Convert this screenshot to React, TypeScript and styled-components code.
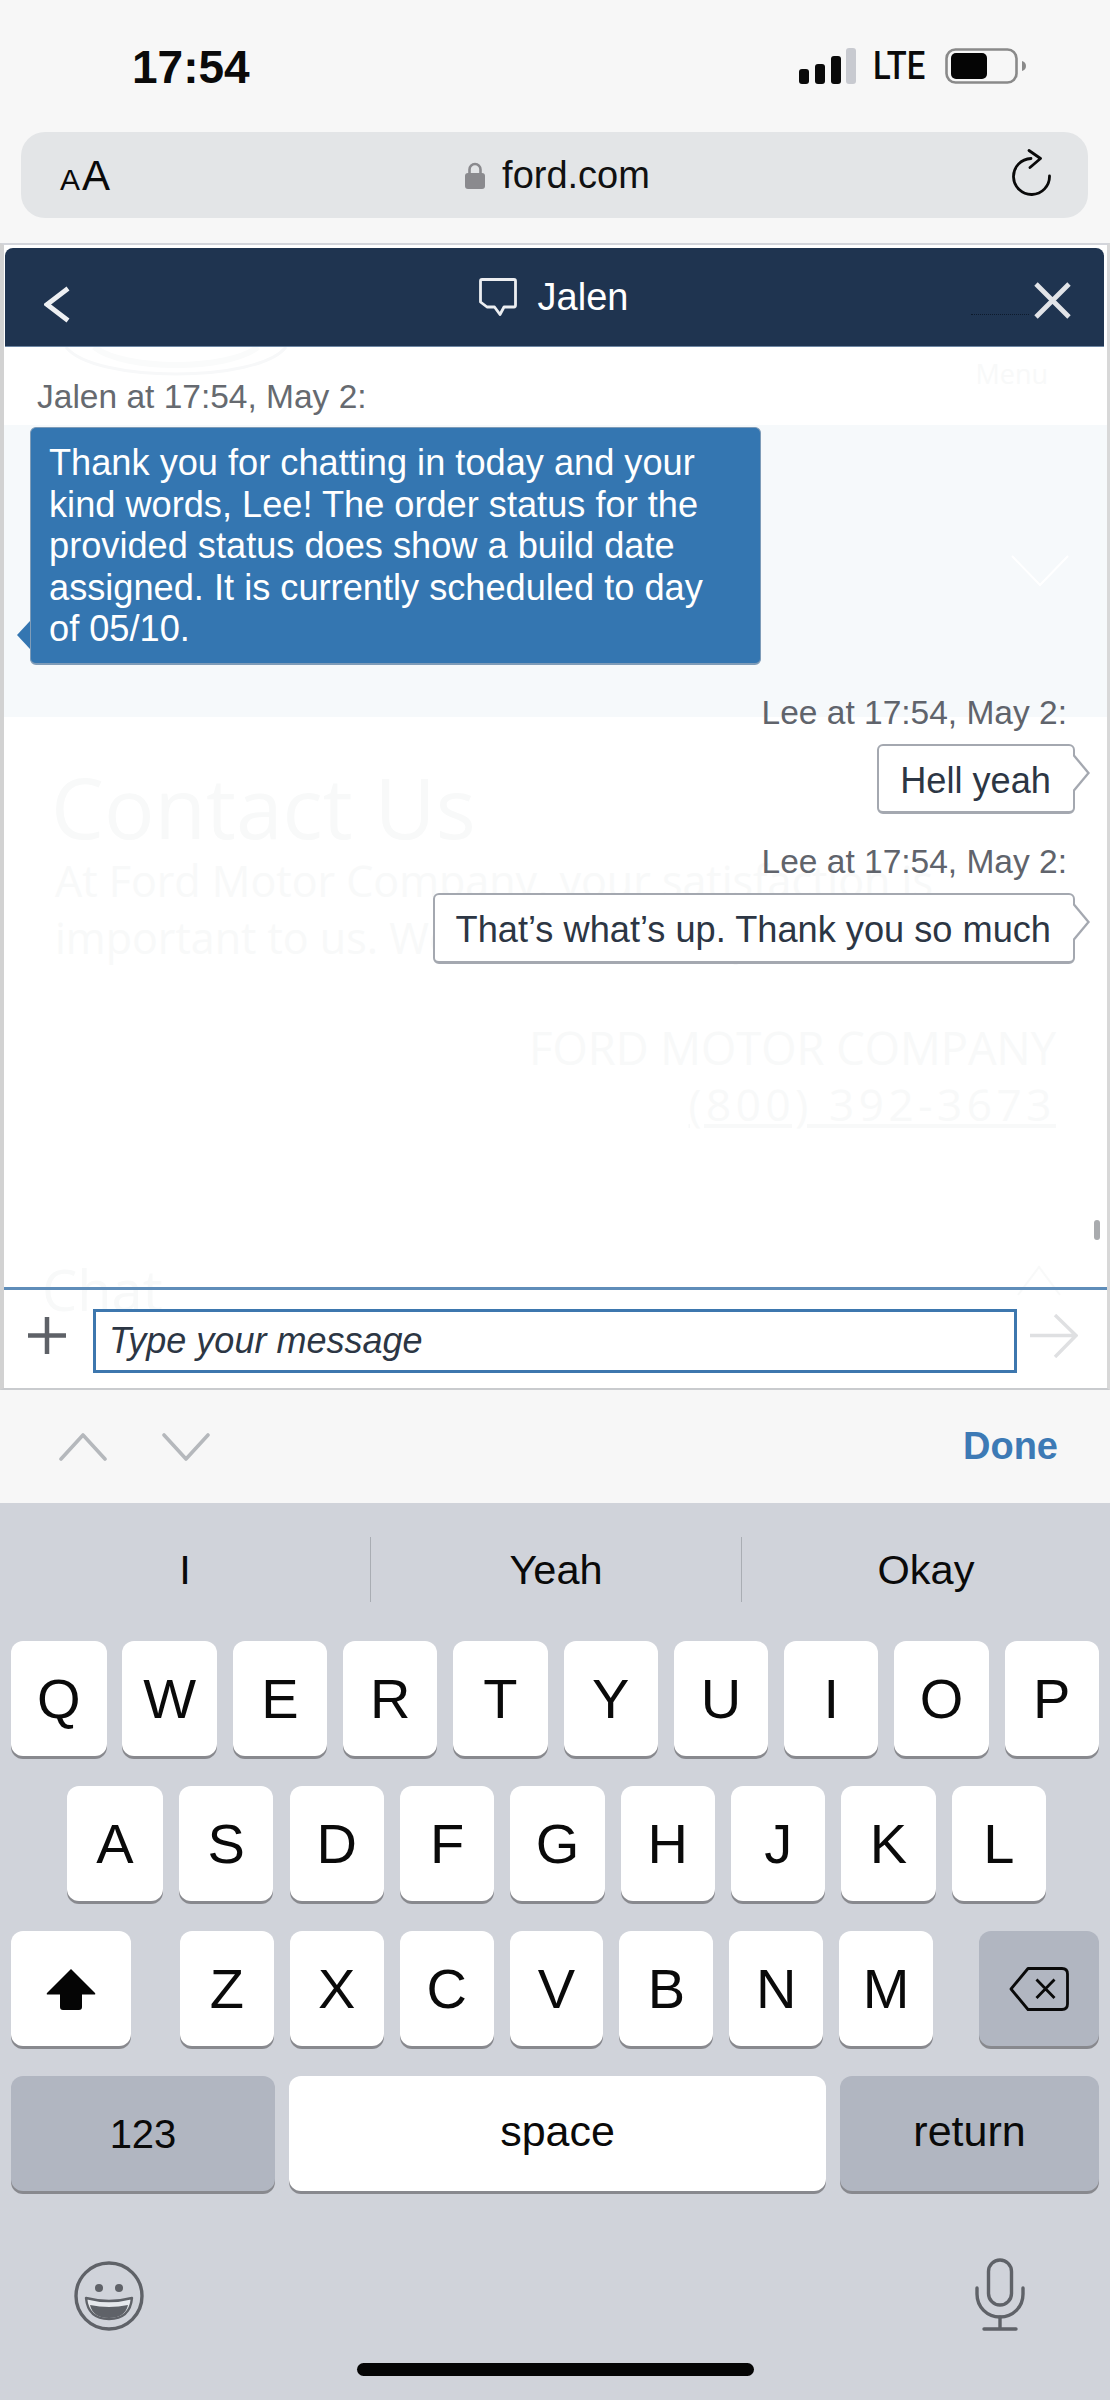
import React from 'react'
import styled, { createGlobalStyle } from 'styled-components'

const GlobalStyle = createGlobalStyle`
  html, body {
    margin: 0;
    padding: 0;
    background: #fff;
  }
  * {
    box-sizing: border-box;
  }
`

const sans = `"Liberation Sans", Arial, sans-serif`
const ghostFont = `"Open Sans", "Noto Sans", sans-serif`

const Screen = styled.div`
  width: 1110px;
  height: 2400px;
  display: flex;
  flex-direction: column;
  overflow: hidden;
  font-family: ${sans};
`

/* browser chrome */
const Chrome = styled.div`
  height: 243px;
  background: #f7f7f7;
  padding: 0 22px 0 21px;
`
const StatusBar = styled.div`
  height: 132px;
  display: flex;
  justify-content: space-between;
  align-items: center;
  padding: 0 62px 0 111px;
`
const Time = styled.div`
  font-size: 46px;
  font-weight: 700;
  color: #0a0a0a;
  line-height: 1;
  position: relative;
  top: 1px;
`
const StatusIcons = styled.div`
  display: flex;
  align-items: center;
  gap: 17px;
`
const Lte = styled.div`
  width: 55px;
  font-family: Roboto, sans-serif;
  font-size: 39px;
  font-weight: 500;
  line-height: 1;
  color: #0a0a0a;
  transform: scaleX(0.84);
  transform-origin: left center;
  white-space: nowrap;
`
const UrlBar = styled.div`
  height: 86px;
  border-radius: 24px;
  background: #e3e5e7;
  display: grid;
  grid-template-columns: 1fr auto 1fr;
  align-items: center;
  padding: 0 37px 0 39px;
`
const TextSize = styled.div`
  display: flex;
  align-items: baseline;
  gap: 2px;
  color: #0a0a0a;
  line-height: 1;
  position: relative;
  top: 1px;
`
const TextSizeA = styled.span<{ $big?: boolean }>`
  font-size: ${p => (p.$big ? 42 : 30)}px;
`
const Address = styled.div`
  display: flex;
  align-items: center;
  gap: 17px;
  padding-left: 4px;
  font-size: 38px;
  color: #111;
`
const Reload = styled.div`
  display: flex;
  justify-content: flex-end;
  margin-bottom: 5px;
`

/* the web page with the chat widget */
const WebView = styled.div`
  height: 1147px;
  background: #fff;
  border-top: 2px solid #d3d5db;
  border-bottom: 2px solid #c9cbce;
  border-left: 4px solid #d2d2d2;
  border-right: 3px solid #d8d8d8;
  padding-top: 3px;
  display: flex;
  flex-direction: column;
`
const ChatHeader = styled.div`
  height: 99px;
  margin: 0 3px 0 1px;
  flex: none;
  background: #1f3450;
  border-radius: 8px 8px 0 0;
  border-bottom: 1px solid #6d86a3;
  display: flex;
  justify-content: space-between;
  align-items: center;
  padding: 0 33px 0 39px;
  position: relative;
  z-index: 2;
`
const HeaderButton = styled.div<{ $offset: number }>`
  display: flex;
  margin-top: ${p => p.$offset}px;
  position: relative;
`
const CloseButton = styled(HeaderButton)`
  &::before {
    content: '';
    position: absolute;
    left: -63px;
    top: 32px;
    width: 58px;
    border-top: 1px dotted #0d1a2c;
  }
`
const HeaderTitle = styled.div`
  display: flex;
  align-items: center;
  gap: 21px;
  color: #fff;
  font-size: 38px;
  line-height: 1;
  position: relative;
  left: 1px;
`
const Stack = styled.div`
  height: 1041px;
  display: grid;
  & > * {
    grid-area: 1 / 1;
    min-width: 0;
    min-height: 0;
  }
`

/* faint page behind the widget */
const GhostPage = styled.div`
  overflow: hidden;
  font-family: ${ghostFont};
  color: #f8f9f9;
`
const GhostTop = styled.div`
  height: 78px;
  display: flex;
  justify-content: space-between;
  align-items: flex-start;
  padding: 0 59px 0 60px;
`
const GhostMenu = styled.div`
  font-size: 27px;
  line-height: 1;
  margin-top: 13px;
`
const GhostBand = styled.div`
  height: 292px;
  background: #f6f9fb;
  display: flex;
  justify-content: flex-end;
  align-items: center;
  padding-right: 38px;
`
const GhostHeading = styled.div`
  margin: 50px 0 0 47px;
  font-size: 84px;
  line-height: 80px;
`
const GhostParagraph = styled.div`
  margin: 5px 0 0 51px;
  width: 900px;
  font-size: 43px;
  line-height: 57px;
`
const GhostContact = styled.div`
  margin-top: 53px;
  padding-right: 51px;
  display: flex;
  flex-direction: column;
  align-items: flex-end;
  font-size: 45.3px;
  line-height: 57px;
`
const GhostPhone = styled.div`
  text-decoration: underline;
  letter-spacing: 4.6px;
  font-size: 44px;
`
const GhostChatRow = styled.div`
  margin-top: 126px;
  padding: 0 46px 0 38px;
  display: flex;
  justify-content: space-between;
  font-size: 56px;
  line-height: 60px;
`

/* messages */
const Foreground = styled.div`
  display: flex;
  flex-direction: column;
`
const Messages = styled.div`
  flex: 1;
  position: relative;
  padding: 31px 32px 0 26px;
  display: flex;
  flex-direction: column;
`
const Meta = styled.div<{ $mine?: boolean }>`
  font-size: 33.5px;
  line-height: 38px;
  color: ${p => (p.$mine ? '#60646c' : '#666a70')};
  margin: ${p => (p.$mine ? '29px 8px 0 0' : '0 0 0 7px')};
  align-self: ${p => (p.$mine ? 'flex-end' : 'flex-start')};
`
const AgentBubble = styled.div`
  position: relative;
  width: 731px;
  margin-top: 11px;
  padding: 14px 35px 13px 18px;
  background: #3476b1;
  border: 1px solid #7f9cb8;
  border-bottom-width: 2px;
  border-radius: 6px;
  color: #fff;
  font-size: 36.2px;
  line-height: 41.5px;

  &::before {
    content: '';
    position: absolute;
    left: -14px;
    bottom: 14px;
    border-style: solid;
    border-width: 14px 13px 14px 0;
    border-color: transparent #3476b1 transparent transparent;
  }
`
const MyBubble = styled.div`
  position: relative;
  align-self: flex-end;
  margin-top: 12px;
  padding: 14px 22px 10px 21px;
  background: #fff;
  border: 2px solid #a4a8b0;
  border-bottom-width: 3px;
  border-radius: 6px;
  color: #2c3644;
  font-size: 36.2px;
  line-height: 41.5px;
  white-space: nowrap;

  &::before,
  &::after {
    content: '';
    position: absolute;
    top: 9px;
    border-style: solid;
    border-width: 18px 0 18px 15px;
    border-color: transparent transparent transparent #a4a8b0;
  }
  &::before {
    right: -17px;
  }
  &::after {
    right: -14px;
    border-left-color: #fff;
  }
`
const ScrollThumb = styled.div`
  position: absolute;
  right: 7px;
  bottom: 47px;
  width: 6px;
  height: 20px;
  border-radius: 3px;
  background: #a9abae;
`
const InputBar = styled.div`
  height: 101px;
  flex: none;
  border-top: 3px solid #5f8db9;
  display: flex;
  align-items: center;
  padding: 3px 26px 0 24px;
`
const InputIcon = styled.div`
  display: flex;
  margin-bottom: 10px;
`
const MessageField = styled.div`
  width: 924px;
  height: 64px;
  margin: 0 13px 0 27px;
  border: 3px solid #3d77ae;
  background: #fff;
  padding-left: 13px;
  display: flex;
  align-items: center;
  font-size: 36px;
  font-style: italic;
  color: #2c3644;
`

/* accessory bar */
const AccessoryBar = styled.div`
  height: 113px;
  flex: none;
  background: #f7f7f7;
  display: flex;
  align-items: center;
  padding: 0 52px 0 59px;
  gap: 55px;
`
const DoneLabel = styled.div`
  margin-left: auto;
  font-size: 38px;
  font-weight: 700;
  color: #3d7ab5;
`

/* keyboard */
const Keyboard = styled.div`
  flex: 1;
  background: #d0d3da;
  display: flex;
  flex-direction: column;
`
const Suggestions = styled.div`
  display: grid;
  grid-template-columns: 371px 371px 1fr;
  margin-top: 34px;
  height: 65px;
`
const Suggestion = styled.div<{ $last?: boolean }>`
  display: flex;
  align-items: center;
  justify-content: center;
  font-size: 41.5px;
  color: #0a0a0a;
  border-right: ${p => (p.$last ? 'none' : '1.5px solid #a9adb3')};
`
const Rows = styled.div`
  margin-top: 39px;
  padding: 0 11px;
  display: flex;
  flex-direction: column;
  gap: 30px;
`
const KeyRow = styled.div<{ $inset?: boolean }>`
  display: flex;
  justify-content: space-between;
  padding: ${p => (p.$inset ? '0 53px 0 56px' : '0')};
`
const KeyGroup = styled.div`
  display: flex;
  gap: 16px;
  margin-left: 3px;
`
const Key = styled.div<{ $w?: number; $dark?: boolean; $size?: number; $lift?: number }>`
  width: ${p => p.$w ?? 94.3}px;
  height: 115px;
  flex: none;
  display: flex;
  align-items: center;
  justify-content: center;
  border-radius: 12px;
  background: ${p => (p.$dark ? '#b1b6c1' : '#fff')};
  box-shadow: 0 3px 0 #88898e;
  color: #0a0a0a;
  font-size: ${p => p.$size ?? 56}px;
  line-height: 1;
  padding-bottom: ${p => p.$lift ?? 0}px;
`
const KeyboardFooter = styled.div`
  margin-top: 67px;
  padding: 0 85px 0 74px;
  display: flex;
  justify-content: space-between;
  align-items: flex-end;
`
const HomeBar = styled.div`
  width: 397px;
  height: 13px;
  margin: 32px auto 0;
  border-radius: 7px;
  background: #050505;
`

const SignalIcon = () => (
  <svg width="57" height="36" viewBox="0 0 57 36">
    <rect x="0" y="21" width="10" height="15" rx="3" fill="#0a0a0a" />
    <rect x="16" y="16" width="10" height="20" rx="3" fill="#0a0a0a" />
    <rect x="32" y="8" width="10" height="28" rx="3" fill="#0a0a0a" />
    <rect x="47" y="0" width="10" height="36" rx="3" fill="#c8cad0" />
  </svg>
)

const BatteryIcon = () => (
  <svg width="81" height="36" viewBox="0 0 81 36">
    <rect x="1.5" y="1.5" width="70" height="33" rx="9" fill="none" stroke="#8a8a8a" strokeWidth="2.6" />
    <rect x="6" y="5" width="36" height="26" rx="5" fill="#050505" />
    <path d="M77 13c2.500 .6 4 2.600 4 5s-1.500 4.400-4 5z" fill="#8a8a8a" />
  </svg>
)

const LockIcon = () => (
  <svg width="20" height="27" viewBox="0 0 20 27">
    <path d="M4.500 12V7.500a5.500 5.500 0 0 1 11 0V12" fill="none" stroke="#8a8a8e" strokeWidth="2.600" />
    <rect x="0" y="11" width="20" height="16" rx="3" fill="#8a8a8e" />
  </svg>
)

const ReloadIcon = () => (
  <svg width="40" height="47" viewBox="0 0 40 47">
    <path
      d="M20 9.500 A18 18 0 1 0 38.500 27"
      fill="none"
      stroke="#0a0a0a"
      strokeWidth="2.800"
      strokeLinecap="round"
    />
    <path
      d="M18 1.500 L29.500 9.500 L19 18.500"
      fill="none"
      stroke="#0a0a0a"
      strokeWidth="2.800"
      strokeLinecap="round"
      strokeLinejoin="round"
    />
  </svg>
)

const BackIcon = () => (
  <svg width="27" height="37" viewBox="0 0 27 37">
    <path d="M24 2.500 L3 18.500 L24 34.500" fill="none" stroke="#eef0f3" strokeWidth="4.800" />
  </svg>
)

const ChatIcon = () => (
  <svg width="38" height="39" viewBox="0 0 38 39">
    <path
      d="M3 1.500 H35 Q36.500 1.500 36.500 3 V27 Q36.500 29 35 29 H25 L21 36.500 L15.500 29 H8 L1.500 24 V3 Q1.500 1.500 3 1.500z"
      fill="none"
      stroke="#eceef1"
      strokeWidth="2.800"
      strokeLinejoin="round"
    />
  </svg>
)

const CloseIcon = () => (
  <svg width="37" height="37" viewBox="0 0 37 37">
    <path d="M2 2 L35 35 M35 2 L2 35" fill="none" stroke="#e2e4e8" strokeWidth="4.800" />
  </svg>
)

const PlusIcon = () => (
  <svg width="38" height="37" viewBox="0 0 38 37">
    <path d="M19 0 V37 M0 18.500 H38" fill="none" stroke="#5e6167" strokeWidth="4.500" />
  </svg>
)

const SendIcon = () => (
  <svg width="48" height="44" viewBox="0 0 48 44">
    <path d="M0 21.500 H46 M25 1 L46 21.500 L25 43" fill="none" stroke="#dfe0e2" strokeWidth="3.400" />
  </svg>
)

const ChevronIcon = ({ up }: { up?: boolean }) => (
  <svg width="48" height="28" viewBox="0 0 48 28">
    <path
      d={up ? 'M2 26 L24 2 L46 26' : 'M2 2 L24 26 L46 2'}
      fill="none"
      stroke="#b5b8bc"
      strokeWidth="3.600"
      strokeLinecap="round"
      strokeLinejoin="round"
    />
  </svg>
)

const GhostLogo = () => (
  <svg width="224" height="30" viewBox="0 0 224 30">
    <path d="M2 0 C30 36 194 36 222 0" fill="none" stroke="#f7f8f9" strokeWidth="3" />
    <path d="M30 0 C60 24 164 24 194 0" fill="none" stroke="#fafbfb" strokeWidth="6" />
  </svg>
)

const GhostChevron = () => (
  <svg width="58" height="32" viewBox="0 0 58 32">
    <path d="M1 1 L29 30 L57 1" fill="none" stroke="#fff" strokeWidth="2" />
  </svg>
)

const GhostUp = () => (
  <svg width="44" height="44" viewBox="0 0 44 44">
    <path d="M1 36 L22 8 L43 36" fill="none" stroke="#f8f9f9" strokeWidth="2" />
  </svg>
)

const ShiftIcon = () => (
  <svg width="50" height="42" viewBox="0 0 50 42">
    <path
      d="M25 1 L49 25 Q50 26.500 48 26.500 H36 V39 Q36 42 33 42 H17 Q14 42 14 39 V26.500 H2 Q0 26.500 1 25z"
      fill="#050505"
    />
  </svg>
)

const BackspaceIcon = () => (
  <svg width="60" height="44" viewBox="0 0 60 44">
    <path
      d="M19 1.500 H53 Q58.500 1.500 58.500 7 V37 Q58.500 42.500 53 42.500 H19 L2 22z"
      fill="none"
      stroke="#0a0a0a"
      strokeWidth="2.800"
      strokeLinejoin="round"
    />
    <path d="M27.500 12.500 L45.500 31 M45.500 12.500 L27.500 31" fill="none" stroke="#0a0a0a" strokeWidth="2.800" />
  </svg>
)

const EmojiIcon = () => (
  <svg width="70" height="70" viewBox="0 0 70 70">
    <circle cx="35" cy="35" r="33" fill="none" stroke="#5f6268" strokeWidth="3.400" />
    <circle cx="25" cy="27" r="4" fill="#5f6268" />
    <circle cx="45" cy="27" r="4" fill="#5f6268" />
    <path
      d="M12 37 Q35 43 58 37 Q56 58 35 58 Q14 58 12 37z"
      fill="#e6e8ec"
      stroke="#5f6268"
      strokeWidth="2.400"
      strokeLinejoin="round"
    />
    <path d="M16 44 Q35 48 54 44 Q51 57 35 57 Q19 57 16 44z" fill="#5f6268" />
  </svg>
)

const MicIcon = () => (
  <svg width="50" height="73" viewBox="0 0 50 73">
    <rect x="13.500" y="2" width="23" height="45" rx="11.500" fill="none" stroke="#5f6268" strokeWidth="3.400" />
    <path
      d="M2 30 V36 C2 49 12 59 25 59 C38 59 48 49 48 36 V30"
      fill="none"
      stroke="#5f6268"
      strokeWidth="3.400"
      strokeLinecap="round"
    />
    <path d="M25 59 V70 M9 71 H41" fill="none" stroke="#5f6268" strokeWidth="3.400" strokeLinecap="round" />
  </svg>
)

const ROW_ONE = ['W', 'E', 'R', 'T', 'Y', 'U', 'I', 'O', 'P']
const ROW_TWO = ['S', 'D', 'F', 'G', 'H', 'J', 'K', 'L']
const ROW_THREE = ['Z', 'X', 'C', 'V', 'B', 'N', 'M']

function App() {
  return (
    <Screen>
      <GlobalStyle />
      <Chrome>
        <StatusBar>
          <Time>17:54</Time>
          <StatusIcons>
            <SignalIcon />
            <Lte>LTE</Lte>
            <BatteryIcon />
          </StatusIcons>
        </StatusBar>
        <UrlBar>
          <TextSize>
            <TextSizeA>A</TextSizeA>
            <TextSizeA $big>A</TextSizeA>
          </TextSize>
          <Address>
            <LockIcon />
            ford.com
          </Address>
          <Reload>
            <ReloadIcon />
          </Reload>
        </UrlBar>
      </Chrome>

      <WebView>
        <ChatHeader>
          <HeaderButton $offset={14}>
            <BackIcon />
          </HeaderButton>
          <HeaderTitle>
            <ChatIcon />
            Jalen
          </HeaderTitle>
          <CloseButton $offset={7}>
            <CloseIcon />
          </CloseButton>
        </ChatHeader>
        <Stack>
          <GhostPage>
            <GhostTop>
              <GhostLogo />
              <GhostMenu>Menu</GhostMenu>
            </GhostTop>
            <GhostBand>
              <GhostChevron />
            </GhostBand>
            <GhostHeading>Contact Us</GhostHeading>
            <GhostParagraph>
              At Ford Motor Company, your satisfaction is important to us. We’re here to help.
            </GhostParagraph>
            <GhostContact>
              <div>FORD MOTOR COMPANY</div>
              <GhostPhone>(800) 392-3673</GhostPhone>
            </GhostContact>
            <GhostChatRow>
              <div>Chat</div>
              <GhostUp />
            </GhostChatRow>
          </GhostPage>
          <Foreground>
            <Messages>
              <Meta>Jalen at 17:54, May 2:</Meta>
              <AgentBubble>
                Thank you for chatting in today and your kind words, Lee! The order status for the
                provided status does show a build date assigned. It is currently scheduled to day
                of 05/10.
              </AgentBubble>
              <Meta $mine>Lee at 17:54, May 2:</Meta>
              <MyBubble>Hell yeah</MyBubble>
              <Meta $mine>Lee at 17:54, May 2:</Meta>
              <MyBubble>That’s what’s up. Thank you so much</MyBubble>
              <ScrollThumb />
            </Messages>
            <InputBar>
              <InputIcon>
                <PlusIcon />
              </InputIcon>
              <MessageField>Type your message</MessageField>
              <InputIcon>
                <SendIcon />
              </InputIcon>
            </InputBar>
          </Foreground>
        </Stack>
      </WebView>

      <AccessoryBar>
        <ChevronIcon up />
        <ChevronIcon />
        <DoneLabel>Done</DoneLabel>
      </AccessoryBar>

      <Keyboard>
        <Suggestions>
          <Suggestion>I</Suggestion>
          <Suggestion>Yeah</Suggestion>
          <Suggestion $last>Okay</Suggestion>
        </Suggestions>
        <Rows>
          <KeyRow>
            <Key $w={95.5}>Q</Key>
            {ROW_ONE.map(k => (
              <Key key={k}>{k}</Key>
            ))}
          </KeyRow>
          <KeyRow $inset>
            <Key $w={96}>A</Key>
            {ROW_TWO.map(k => (
              <Key key={k} $w={94.2}>
                {k}
              </Key>
            ))}
          </KeyRow>
          <KeyRow>
            <Key $w={120}>
              <ShiftIcon />
            </Key>
            <KeyGroup>
              {ROW_THREE.map(k => (
                <Key key={k} $w={93.9}>
                  {k}
                </Key>
              ))}
            </KeyGroup>
            <Key $w={120} $dark>
              <BackspaceIcon />
            </Key>
          </KeyRow>
          <KeyRow>
            <Key $w={264} $dark $size={40}>
              123
            </Key>
            <Key $w={537} $size={43} $lift={5}>
              space
            </Key>
            <Key $w={259} $dark $size={43} $lift={5}>
              return
            </Key>
          </KeyRow>
        </Rows>
        <KeyboardFooter>
          <EmojiIcon />
          <MicIcon />
        </KeyboardFooter>
        <HomeBar />
      </Keyboard>
    </Screen>
  )
}

export default App
